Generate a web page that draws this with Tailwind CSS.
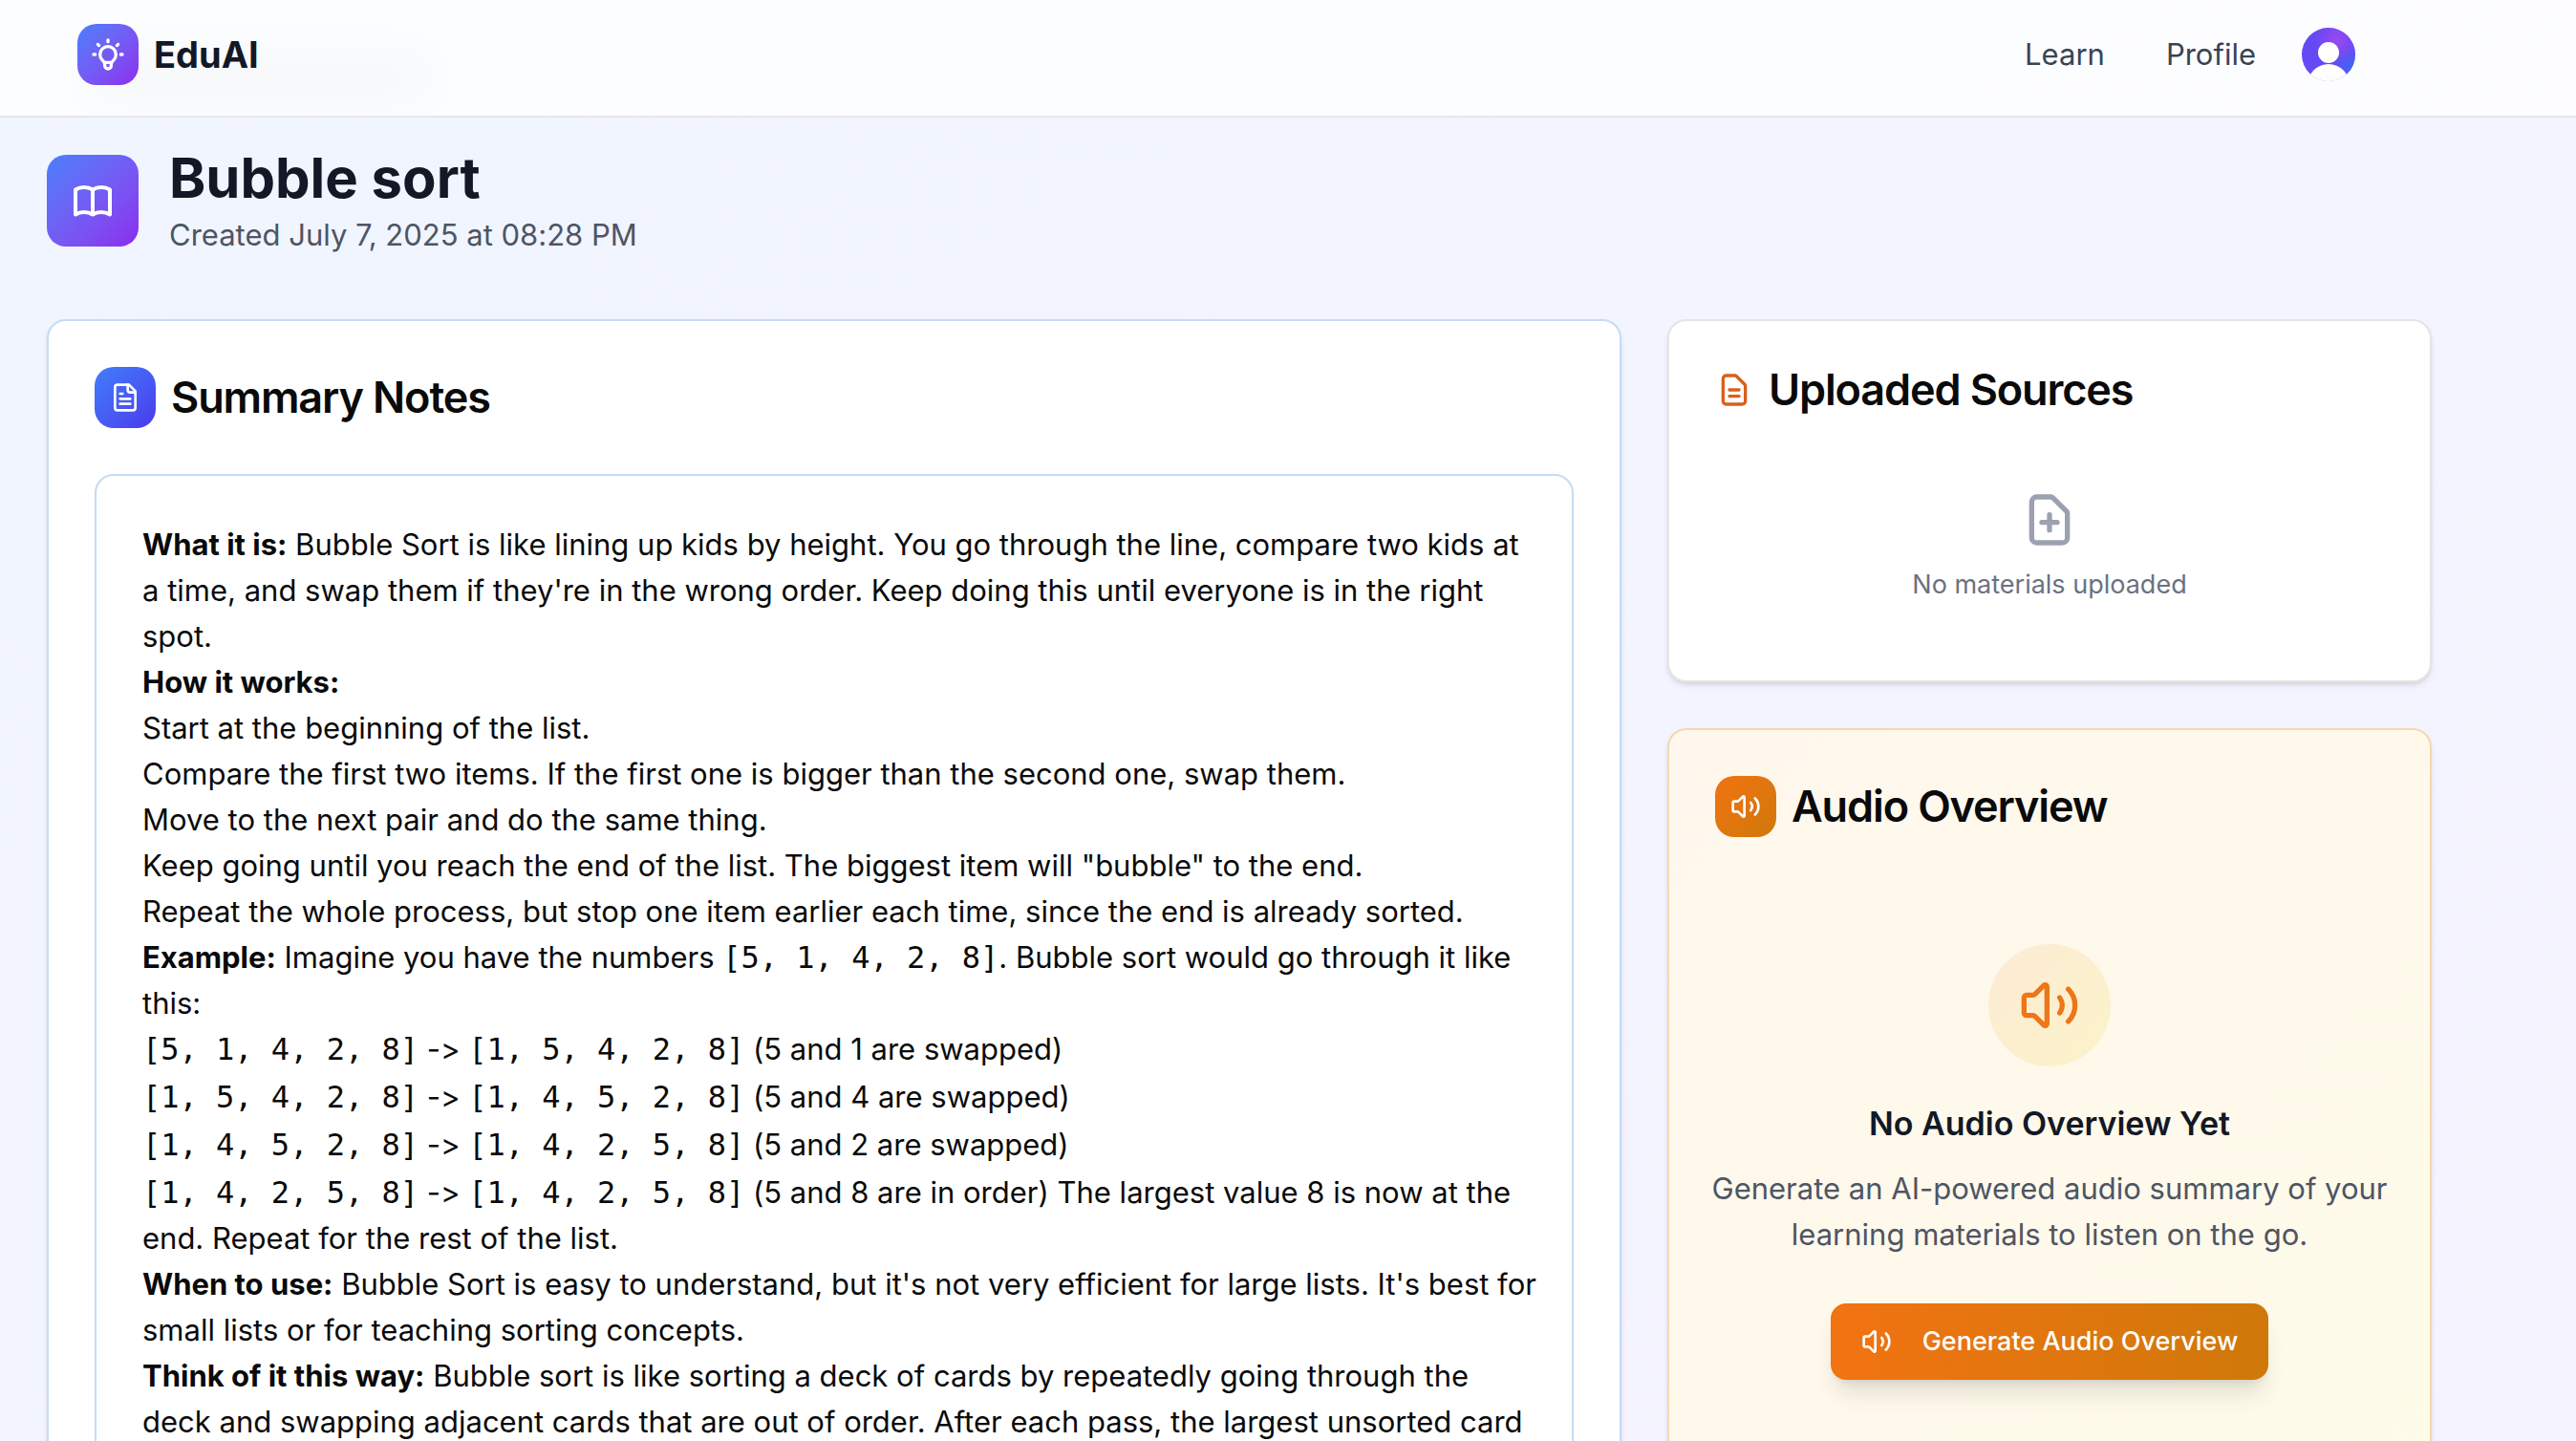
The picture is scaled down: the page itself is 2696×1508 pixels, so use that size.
<!DOCTYPE html>
<html lang="en">
<head>
<meta charset="utf-8">
<title>Bubble sort - EduAI</title>
<script src="https://cdn.jsdelivr.net/npm/@tailwindcss/browser@4"></script>
</head>
<body class="min-h-screen bg-linear-to-br from-[#f0f5ff] to-[#f5f3ff] font-['Inter',sans-serif] text-[31px] leading-[48px] text-neutral-950 [font-variant-ligatures:no-contextual]">
  <header class="relative overflow-hidden border-b-2 border-gray-200 bg-white/80">
    <div class="absolute top-16 left-24 h-8 w-88 rounded-full bg-black/3 blur-xl"></div>
    <div class="relative flex h-[121px] max-w-[2546px] items-center justify-between px-[81px] pb-2">
      <a href="#" class="flex items-center gap-4">
        <span class="flex size-16 items-center justify-center rounded-[20px] bg-linear-to-br from-[#467ffa] to-[#8b28ee] text-white">
          <svg class="size-10" viewBox="0 0 24 24" fill="none" stroke="currentColor" stroke-width="2" stroke-linecap="round" stroke-linejoin="round"><path d="M9.663 17h4.673M12 3v1m6.364 1.636l-.707.707M21 12h-1M4 12H3m3.343-5.657l-.707-.707m2.828 9.9a5 5 0 117.072 0l-.548.547A3.374 3.374 0 0014 18.469V19a2 2 0 11-4 0v-.531c0-.895-.356-1.754-.988-2.386l-.548-.547z"/></svg>
        </span>
        <span class="text-[38px] font-bold text-[#131827]">EduAI</span>
      </a>
      <nav class="flex items-center gap-16 text-[#3b4352]">
        <a href="#">Learn</a>
        <a href="#">Profile</a>
        <button type="button" aria-label="Account" class="-ml-4 size-14 overflow-hidden rounded-full">
          <svg class="size-14" viewBox="0 0 56 56"><defs><radialGradient id="av" cx="0.66" cy="0.24" r="0.42"><stop offset="0" stop-color="#9a48f0"/><stop offset="1" stop-color="#9a48f0" stop-opacity="0"/></radialGradient><radialGradient id="av2" cx="0.95" cy="0.75" r="0.45"><stop offset="0" stop-color="#3f66f4"/><stop offset="1" stop-color="#3f66f4" stop-opacity="0"/></radialGradient></defs><rect width="56" height="56" fill="#6549f5"/><rect width="56" height="56" fill="url(#av2)"/><rect width="56" height="56" fill="url(#av)"/><circle cx="28" cy="26" r="11" fill="#fff"/><circle cx="28" cy="60" r="22" fill="#fff"/><rect y="49" width="56" height="7" fill="#fdfdff"/></svg>
        </button>
      </nav>
    </div>
  </header>
  <main class="max-w-[2594px] px-[49px] pt-[27px] pb-12">
    <div class="flex items-center gap-8">
      <div class="flex size-24 items-center justify-center rounded-[20px] bg-linear-to-br from-[#467ffa] to-[#8b28ee] text-white">
        <svg class="size-12" viewBox="0 0 24 24" fill="none" stroke="currentColor" stroke-width="2" stroke-linecap="round" stroke-linejoin="round"><path d="M12 6.253v13m0-13C10.832 5.477 9.246 5 7.5 5S4.168 5.477 3 6.253v13C4.168 18.477 5.754 18 7.5 18s3.332.477 4.5 1.253m0-13C13.168 5.477 14.754 5 16.5 5c1.747 0 3.332.477 4.5 1.253v13C19.832 18.477 18.247 18 16.5 18c-1.746 0-3.332.477-4.5 1.253"/></svg>
      </div>
      <div>
        <h1 class="text-[58px] leading-[72px] font-bold text-[#131827]">Bubble sort</h1>
        <p class="text-[#4e5563]">Created July 7, 2025 at 08:28 PM</p>
      </div>
    </div>
    <div class="mt-16 grid grid-cols-3 items-start gap-12">
      <section class="col-span-2 rounded-[20px] border-2 border-[#c6dbf6] bg-white p-12 shadow-md">
        <div class="flex items-center gap-4">
          <div class="flex size-16 items-center justify-center rounded-[20px] bg-linear-to-br from-[#417cfb] to-[#4a38ec] text-white">
            <svg class="size-8" viewBox="0 0 24 24" fill="none" stroke="currentColor" stroke-width="2" stroke-linecap="round" stroke-linejoin="round"><path d="M15 2H6a2 2 0 0 0-2 2v16a2 2 0 0 0 2 2h12a2 2 0 0 0 2-2V7Z"/><path d="M14 2v4a2 2 0 0 0 2 2h4M10 9H8M16 13H8M16 17H8"/></svg>
          </div>
          <h2 class="text-[45px] leading-[48px] font-semibold tracking-tight">Summary Notes</h2>
        </div>
        <article class="mt-12 rounded-[20px] border-2 border-[#c6dbf6] py-12 pr-8 pl-12 shadow-xs">
          <p><strong>What it is:</strong> Bubble Sort is like lining up kids by height. You go through the line, compare two kids at<br>a time, and swap them if they're in the wrong order. Keep doing this until everyone is in the right<br>spot.</p>
          <p><strong>How it works:</strong></p>
          <ul>
            <li>Start at the beginning of the list.</li>
            <li>Compare the first two items. If the first one is bigger than the second one, swap them.</li>
            <li>Move to the next pair and do the same thing.</li>
            <li>Keep going until you reach the end of the list. The biggest item will "bubble" to the end.</li>
            <li>Repeat the whole process, but stop one item earlier each time, since the end is already sorted.</li>
          </ul>
          <p><strong>Example:</strong> Imagine you have the numbers <code class="font-['DejaVu_Sans_Mono',monospace] text-[32px]">[5, 1, 4, 2, 8]</code>. Bubble sort would go through it like<br>this:</p>
          <ul class="flex flex-col gap-0.5">
            <li><code class="font-['DejaVu_Sans_Mono',monospace] text-[32px]">[5, 1, 4, 2, 8]</code> -&gt; <code class="font-['DejaVu_Sans_Mono',monospace] text-[32px]">[1, 5, 4, 2, 8]</code> (5 and 1 are swapped)</li>
            <li><code class="font-['DejaVu_Sans_Mono',monospace] text-[32px]">[1, 5, 4, 2, 8]</code> -&gt; <code class="font-['DejaVu_Sans_Mono',monospace] text-[32px]">[1, 4, 5, 2, 8]</code> (5 and 4 are swapped)</li>
            <li><code class="font-['DejaVu_Sans_Mono',monospace] text-[32px]">[1, 4, 5, 2, 8]</code> -&gt; <code class="font-['DejaVu_Sans_Mono',monospace] text-[32px]">[1, 4, 2, 5, 8]</code> (5 and 2 are swapped)</li>
            <li><code class="font-['DejaVu_Sans_Mono',monospace] text-[32px]">[1, 4, 2, 5, 8]</code> -&gt; <code class="font-['DejaVu_Sans_Mono',monospace] text-[32px]">[1, 4, 2, 5, 8]</code> (5 and 8 are in order) The largest value 8 is now at the<br>end. Repeat for the rest of the list.</li>
          </ul>
          <p><strong>When to use:</strong> Bubble Sort is easy to understand, but it's not very efficient for large lists. It's best for<br>small lists or for teaching sorting concepts.</p>
          <p><strong>Think of it this way:</strong> Bubble sort is like sorting a deck of cards by repeatedly going through the<br>deck and swapping adjacent cards that are out of order. After each pass, the largest unsorted card</p>
        </article>
      </section>
      <div class="flex flex-col gap-12">
        <section class="rounded-[20px] border-2 border-neutral-200 bg-white p-12 shadow-md">
          <div class="flex items-center gap-4">
            <svg class="size-10 text-[#d9601a]" viewBox="0 0 24 24" fill="none" stroke="currentColor" stroke-width="2" stroke-linecap="round" stroke-linejoin="round"><path d="M9 12h6m-6 4h6m2 5H7a2 2 0 01-2-2V5a2 2 0 012-2h5.586a1 1 0 01.707.293l5.414 5.414a1 1 0 01.293.707V19a2 2 0 01-2 2z"/></svg>
            <h2 class="text-[45px] leading-[48px] font-semibold tracking-tight">Uploaded Sources</h2>
          </div>
          <div class="flex flex-col items-center pt-20 pb-8 text-gray-500">
            <svg class="size-16 text-[#9ca1af]" viewBox="0 0 24 24" fill="none" stroke="currentColor" stroke-width="2" stroke-linecap="round" stroke-linejoin="round"><path d="M9 13h6m-3-3v6m5 5H7a2 2 0 01-2-2V5a2 2 0 012-2h5.586a1 1 0 01.707.293l5.414 5.414a1 1 0 01.293.707V19a2 2 0 01-2 2z"/></svg>
            <p class="mt-4 text-[27px] leading-10">No materials uploaded</p>
          </div>
        </section>
        <section class="rounded-[20px] border-2 border-[#f5d8ae] bg-linear-to-br from-[#fff7ed] to-[#fefbe9] p-12 shadow-md">
          <div class="flex items-center gap-4">
            <div class="flex size-16 items-center justify-center rounded-[20px] bg-linear-to-br from-[#f27312] to-[#cf780a] text-white">
              <svg class="size-8" viewBox="0 0 24 24" fill="none" stroke="currentColor" stroke-width="2" stroke-linecap="round" stroke-linejoin="round"><path d="M11 4.702a.705.705 0 0 0-1.203-.498L6.413 7.587A1.4 1.4 0 0 1 5.416 8H3a1 1 0 0 0-1 1v6a1 1 0 0 0 1 1h2.416a1.4 1.4 0 0 1 .997.413l3.383 3.384A.705.705 0 0 0 11 19.298zM16 9a5 5 0 0 1 0 6M19.364 18.364a9 9 0 0 0 0-12.728"/></svg>
            </div>
            <h2 class="text-[45px] leading-[48px] font-semibold tracking-tight">Audio Overview</h2>
          </div>
          <div class="-mx-4 flex flex-col items-center pt-28 pb-16 text-center">
            <div class="flex size-32 items-center justify-center rounded-full bg-linear-to-br from-[#fdebd6] to-[#fbf3c8] text-[#ee7518]">
              <svg class="size-16" viewBox="0 0 24 24" fill="none" stroke="currentColor" stroke-width="2" stroke-linecap="round" stroke-linejoin="round"><path d="M11 4.702a.705.705 0 0 0-1.203-.498L6.413 7.587A1.4 1.4 0 0 1 5.416 8H3a1 1 0 0 0-1 1v6a1 1 0 0 0 1 1h2.416a1.4 1.4 0 0 1 .997.413l3.383 3.384A.705.705 0 0 0 11 19.298zM16 9a5 5 0 0 1 0 6M19.364 18.364a9 9 0 0 0 0-12.728"/></svg>
            </div>
            <h3 class="mt-8 text-[34px] leading-[56px] font-semibold text-[#131827]">No Audio Overview Yet</h3>
            <p class="mt-4 text-[#4e5563]">Generate an AI-powered audio summary of your<br>learning materials to listen on the go.</p>
            <button type="button" class="mt-12 flex h-20 items-center gap-8 rounded-2xl bg-linear-to-r from-[#f27312] to-[#cf780a] px-8 text-[27px] font-medium text-white shadow-xl">
              <svg class="size-8" viewBox="0 0 24 24" fill="none" stroke="currentColor" stroke-width="2" stroke-linecap="round" stroke-linejoin="round"><path d="M11 4.702a.705.705 0 0 0-1.203-.498L6.413 7.587A1.4 1.4 0 0 1 5.416 8H3a1 1 0 0 0-1 1v6a1 1 0 0 0 1 1h2.416a1.4 1.4 0 0 1 .997.413l3.383 3.384A.705.705 0 0 0 11 19.298zM16 9a5 5 0 0 1 0 6M19.364 18.364a9 9 0 0 0 0-12.728"/></svg>
              Generate Audio Overview
            </button>
          </div>
        </section>
      </div>
    </div>
  </main>
</body>
</html>
